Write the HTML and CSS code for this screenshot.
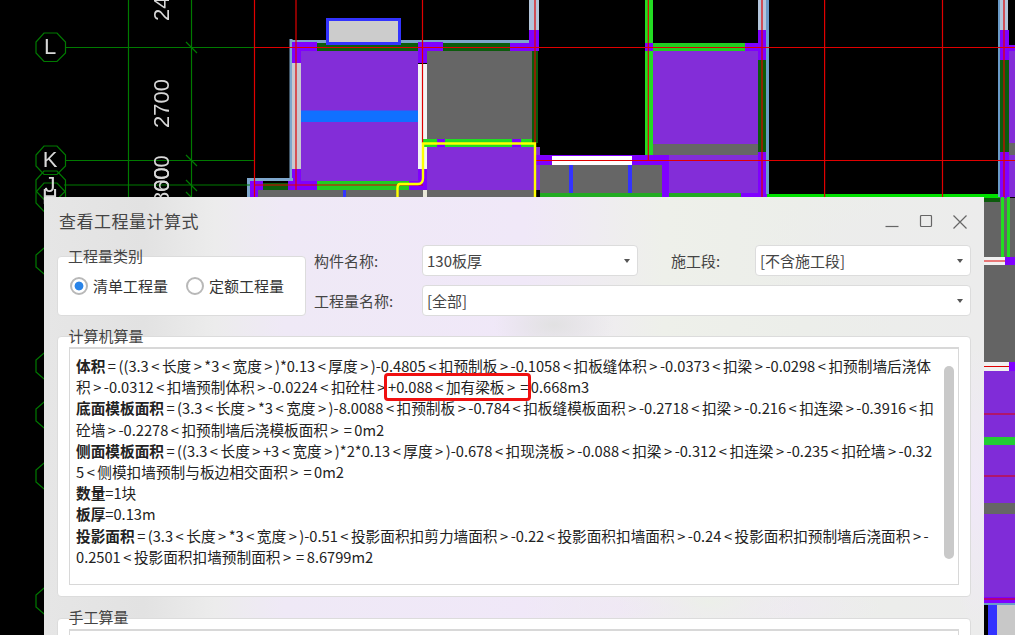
FILE: index.html
```html
<!DOCTYPE html>
<html lang="zh-CN">
<head>
<meta charset="utf-8">
<title>查看工程量计算式</title>
<link rel="stylesheet" href="styles.css">
</head>
<body>
<svg class="cad" width="1015" height="635" viewBox="0 0 1015 635" xmlns="http://www.w3.org/2000/svg">
  <rect width="1015" height="635" fill="#000"/>
  <!-- left walls -->
  <rect x="289.500" y="39" width="3" height="140" fill="#7ea7cc"/>
  <rect x="292" y="40" width="240" height="3" fill="#7ea7cc"/>
  <rect x="292" y="63" width="9" height="106" fill="#c8c8d0"/>
  <rect x="301" y="51" width="117" height="130" fill="#832dd8"/>
  <rect x="301" y="110.500" width="117" height="11.500" fill="#1070ff"/>
  <rect x="292" y="42" width="25" height="9" fill="#8000ff"/>
  <rect x="292" y="42" width="9" height="21" fill="#8000ff"/>
  <rect x="292" y="169" width="9" height="21" fill="#8000ff"/>
  <rect x="317" y="43" width="101" height="8" fill="#0c5c0c"/>
  <rect x="418" y="42" width="25" height="9" fill="#8000ff"/>
  <rect x="418" y="42" width="9" height="21" fill="#8000ff"/>
  <rect x="443" y="43" width="90" height="8" fill="#0c5c0c"/>
  <rect x="418" y="64" width="9" height="105" fill="#f4f4f4"/>
  <rect x="427" y="51" width="105" height="89" fill="#666"/>
  <rect x="427" y="147" width="113" height="43" fill="#832dd8"/>
  <rect x="418" y="169" width="9" height="21" fill="#8000ff"/>
  <rect x="427" y="190" width="108" height="7" fill="#666"/>
  <rect x="423" y="190" width="4" height="7" fill="#e8e8d8"/>
  <!-- small window -->
  <rect x="327.500" y="19.500" width="72" height="24" fill="#ccc" stroke="#3333ff" stroke-width="3"/>
  <!-- lower-left band -->
  <rect x="247" y="178" width="46" height="3" fill="#7ea7cc"/>
  <rect x="247" y="178" width="3" height="19" fill="#7ea7cc"/>
  <rect x="250" y="181" width="13" height="16" fill="#8000ff"/>
  <rect x="263" y="183" width="25" height="7" fill="#0c5c0c"/>
  <rect x="288" y="181" width="29" height="9" fill="#8000ff"/>
  <rect x="317" y="181" width="92" height="9" fill="#22cc22"/>
  <rect x="409" y="181" width="18" height="9" fill="#8000ff"/>
  <rect x="258" y="190" width="165" height="7" fill="#666"/>
  <rect x="343" y="190" width="3" height="7" fill="#3333ff"/>
  <!-- beam -->
  <rect x="423" y="139" width="14" height="8" fill="#22dd22"/>
  <rect x="437" y="139" width="8" height="8" fill="#8000ff"/>
  <rect x="445" y="139" width="67" height="8" fill="#22dd22"/>
  <rect x="512" y="139" width="9" height="8" fill="#8000ff"/>
  <rect x="521" y="139" width="15" height="8" fill="#22dd22"/>
  <!-- middle walls -->
  <rect x="529" y="0" width="10" height="30" fill="#b4c6dc"/>
  <rect x="529" y="30" width="10" height="21" fill="#8000ff"/>
  <rect x="510" y="43" width="29" height="8" fill="#8000ff"/>
  <rect x="532" y="51" width="6" height="92" fill="#0c5c0c"/>
  <rect x="645" y="0" width="8" height="155" fill="#22dd22"/>
  <rect x="645" y="43" width="8" height="8" fill="#8000ff"/>
  <rect x="653" y="43" width="92" height="8" fill="#22cc22"/>
  <rect x="653" y="51" width="105" height="93" fill="#832dd8"/>
  <rect x="653" y="144" width="105" height="11" fill="#666"/>
  <rect x="745" y="43" width="13" height="8" fill="#8000ff"/>
  <rect x="758" y="0" width="10" height="30" fill="#b4c6dc"/>
  <rect x="758" y="30" width="10" height="30" fill="#8000ff"/>
  <rect x="758" y="60" width="8" height="92" fill="#0c5c0c"/>
  <rect x="758" y="152" width="10" height="45" fill="#8000ff"/>
  <rect x="766" y="0" width="3" height="194" fill="#6a9bc8"/>
  <rect x="535" y="155" width="134" height="10" fill="#8000ff"/>
  <rect x="552" y="156" width="80" height="9" fill="#fff"/>
  <rect x="540" y="165" width="122" height="32" fill="#666"/>
  <rect x="569" y="165" width="4" height="29" fill="#3333ff"/>
  <rect x="628" y="165" width="4" height="29" fill="#3333ff"/>
  <rect x="540" y="193" width="122" height="4" fill="#22aa22"/>
  <rect x="662" y="165" width="7" height="32" fill="#8000ff"/>
  <rect x="669" y="155" width="89" height="42" fill="#832dd8"/>
  <rect x="669" y="193" width="72" height="4" fill="#22aa22"/>
  <rect x="741" y="193" width="17" height="4" fill="#8000ff"/>
  <rect x="767" y="194" width="233" height="5" fill="#00e000"/>
  <!-- right walls -->
  <rect x="998" y="0" width="10" height="30" fill="#b4c6dc"/>
  <rect x="998" y="0" width="2" height="197" fill="#6a9bc8"/>
  <rect x="1000" y="30" width="9" height="30" fill="#8000ff"/>
  <rect x="1000" y="60" width="9" height="92" fill="#0c5c0c"/>
  <rect x="1000" y="152" width="9" height="46" fill="#8000ff"/>
  <rect x="1009" y="45" width="6" height="6" fill="#8000ff"/>
  <rect x="1009" y="51" width="6" height="92" fill="#832dd8"/>
  <rect x="1009" y="143" width="6" height="12" fill="#666"/>
  <rect x="1009" y="155" width="6" height="42" fill="#832dd8"/>
  <!-- right strip -->
  <rect x="984" y="198" width="31" height="164" fill="#646464"/>
  <rect x="960" y="198" width="40" height="4" fill="#0c5c0c"/>
  <rect x="1001" y="197" width="3" height="61" fill="#22dd22"/>
  <rect x="1007" y="197" width="3" height="60" fill="#22dd22"/>
  <rect x="984" y="257" width="21" height="8" fill="#f0f0f0"/>
  <rect x="1005" y="257" width="10" height="8" fill="#8000ff"/>
  <rect x="984" y="362" width="25" height="9" fill="#f0f0f0"/>
  <rect x="1009" y="362" width="6" height="9" fill="#8000ff"/>
  <rect x="984" y="371" width="31" height="226" fill="#802cd8"/>
  <rect x="984" y="437" width="31" height="8" fill="#22cc33"/>
  <rect x="984" y="503" width="31" height="11" fill="#666"/>
  <rect x="984" y="597" width="31" height="6" fill="#8000ff"/>
  <rect x="984" y="603" width="31" height="2" fill="#6a9bc8"/>
  <rect x="988" y="605" width="9" height="30" fill="#3333ff"/>
  <rect x="997" y="605" width="18" height="30" fill="#c8c8c8"/>
  <!-- green axis -->
  <g fill="none" stroke="#007a00" stroke-width="1.200">
    <path d="M128.500 0V197M191.500 0V197M66 47.500H296M66 160.500H254.500M64 185H250"/>
    <path d="M186 42L197 53M186 155L197 166M186 180L197 191M186 192L197 203"/>
    <polygon points="44,33 57,33 65.500,42 65.500,53 57,61.500 44,61.500 36,53 36,42"/>
    <polygon points="44,146 57,146 65.500,155 65.500,166 57,174.500 44,174.500 36,166 36,155"/>
    <polygon points="44,171 57,171 65.500,180 65.500,191 57,199.500 44,199.500 36,191 36,180"/>
    <polygon points="44,183 57,183 65.500,192 65.500,203 57,211.500 44,211.500 36,203 36,192"/>
    <polygon points="44,248 57,248 65,255 65,267 57,274 44,274 36,267 36,255"/>
    <polygon points="44,353 57,353 65,360 65,372 57,379 44,379 36,372 36,360"/>
    <polygon points="44,402 57,402 65,409 65,421 57,428 44,428 36,421 36,409"/>
    <polygon points="44,463 57,463 65,470 65,482 57,489 44,489 36,482 36,470"/>
    <polygon points="44,588 57,588 65,595 65,607 57,614 44,614 36,607 36,595"/>
  </g>
  <!-- red lines -->
  <g fill="none" stroke="#e00000" stroke-width="1.200">
    <path d="M254.500 0V197M296 0V190M422.500 0V143M648.300 0V160M762 0V197M824.600 0V197M942.500 0V197M1004 0V197M535 0V143"/>
    <path d="M254.500 47.500H1015M535 160.500H1015M254.500 185H423M552 160.500H632M984 261H1005M984 366.500H1009M984 414H1015M984 476H1015M984 599H1015"/>
  </g>
  <path d="M535 197V143.500H423V178Q423 184 418 184H400Q397.500 184 397.500 188V197" fill="none" stroke="#ffff00" stroke-width="2.400"/>
  <g class="cad-text">
    <text x="50" y="54" text-anchor="middle">L</text>
    <text x="50" y="167" text-anchor="middle">K</text>
    <text x="50" y="192" text-anchor="middle">J</text>
    <text x="50" y="204" text-anchor="middle">H</text>
    <text transform="translate(169 21) rotate(-90)">24</text>
    <text transform="translate(169 128) rotate(-90)">2700</text>
    <text transform="translate(169 192) rotate(-90)">600</text>
    <text transform="translate(169 204) rotate(-90)">800</text>
  </g>
</svg>

<main class="dialog">
  <header class="titlebar">
    <h1 class="title">查看工程量计算式</h1>
    <div class="win-buttons">
      <svg class="win-icon" width="14" height="14" viewBox="0 0 14 14"><path d="M0.500 11.500H13.500"/></svg>
      <svg class="win-icon" width="14" height="14" viewBox="0 0 14 14"><rect x="1.500" y="0.500" width="11" height="11" rx="1"/></svg>
      <svg class="win-icon" width="14" height="14" viewBox="0 0 14 14"><path d="M0.500 0.500L13.500 13.500M13.500 0.500L0.500 13.500"/></svg>
    </div>
  </header>

  <section class="top-row">
    <div class="group type-group">
      <div class="group-title">工程量类别</div>
      <div class="radios">
        <span class="radio-item"><span class="radio radio-on"></span>清单工程量</span>
        <span class="radio-item"><span class="radio"></span>定额工程量</span>
      </div>
    </div>
    <div class="fields">
      <span class="field-label">构件名称:</span>
      <div class="combo"><span>130板厚</span><i class="arrow"></i></div>
      <span class="field-label field-label-mid">施工段:</span>
      <div class="combo"><span>[不含施工段]</span><i class="arrow"></i></div>
      <span class="field-label">工程量名称:</span>
      <div class="combo combo-wide"><span>[全部]</span><i class="arrow"></i></div>
    </div>
  </section>

  <section class="group calc-group">
    <div class="group-title">计算机算量</div>
    <div class="text-box">
      <div class="calc-text">
        <div class="calc-line"><b>体积</b><i>=</i>((3.3<i>&lt;</i>长度<i>&gt;</i>*3<i>&lt;</i>宽度<i>&gt;</i>)*0.13<i>&lt;</i>厚度<i>&gt;</i>)-0.4805<i>&lt;</i>扣预制板<i>&gt;</i>-0.1058<i>&lt;</i>扣板缝体积<i>&gt;</i>-0.0373<i>&lt;</i>扣梁<i>&gt;</i>-0.0298<i>&lt;</i>扣预制墙后浇体</div>
        <div class="calc-line">积<i>&gt;</i>-0.0312<i>&lt;</i>扣墙预制体积<i>&gt;</i>-0.0224<i>&lt;</i>扣砼柱<i>&gt;</i>+0.088<i>&lt;</i>加有梁板<i>&gt;</i><i>=</i>0.668m3</div>
        <div class="calc-line"><b>底面模板面积</b><i>=</i>(3.3<i>&lt;</i>长度<i>&gt;</i>*3<i>&lt;</i>宽度<i>&gt;</i>)-8.0088<i>&lt;</i>扣预制板<i>&gt;</i>-0.784<i>&lt;</i>扣板缝模板面积<i>&gt;</i>-0.2718<i>&lt;</i>扣梁<i>&gt;</i>-0.216<i>&lt;</i>扣连梁<i>&gt;</i>-0.3916<i>&lt;</i>扣</div>
        <div class="calc-line">砼墙<i>&gt;</i>-0.2278<i>&lt;</i>扣预制墙后浇模板面积<i>&gt;</i><i>=</i>0m2</div>
        <div class="calc-line"><b>侧面模板面积</b><i>=</i>((3.3<i>&lt;</i>长度<i>&gt;</i>+3<i>&lt;</i>宽度<i>&gt;</i>)*2*0.13<i>&lt;</i>厚度<i>&gt;</i>)-0.678<i>&lt;</i>扣现浇板<i>&gt;</i>-0.088<i>&lt;</i>扣梁<i>&gt;</i>-0.312<i>&lt;</i>扣连梁<i>&gt;</i>-0.235<i>&lt;</i>扣砼墙<i>&gt;</i>-0.32</div>
        <div class="calc-line">5<i>&lt;</i>侧模扣墙预制与板边相交面积<i>&gt;</i><i>=</i>0m2</div>
        <div class="calc-line"><b>数量</b>=1块</div>
        <div class="calc-line"><b>板厚</b>=0.13m</div>
        <div class="calc-line"><b>投影面积</b><i>=</i>(3.3<i>&lt;</i>长度<i>&gt;</i>*3<i>&lt;</i>宽度<i>&gt;</i>)-0.51<i>&lt;</i>投影面积扣剪力墙面积<i>&gt;</i>-0.22<i>&lt;</i>投影面积扣墙面积<i>&gt;</i>-0.24<i>&lt;</i>投影面积扣预制墙后浇面积<i>&gt;</i>-</div>
        <div class="calc-line">0.2501<i>&lt;</i>投影面积扣墙预制面积<i>&gt;</i><i>=</i>8.6799m2</div>
      </div>
      <div class="scrollbar"></div>
      <div class="highlight"></div>
    </div>
  </section>

  <section class="group manual-group">
    <div class="group-title">手工算量</div>
    <div class="text-box text-box-manual"></div>
  </section>
</main>
</body>
</html>
```

FILE: styles.css
```css
* { box-sizing: border-box; }
html, body {
  margin: 0;
  width: 1015px;
  height: 635px;
  overflow: hidden;
  background: #000;
}
body {
  position: relative;
  font-family: "Noto Sans CJK SC", "Noto Sans", sans-serif;
  font-size: 15px;
  color: #333;
}
.cad {
  position: absolute;
  left: 0;
  top: 0;
  display: block;
  filter: blur(0.45px);
}
.cad-text text {
  font-family: "Liberation Sans", sans-serif;
  font-size: 22px;
  fill: #d8d8d8;
}
.dialog {
  position: absolute;
  left: 44px;
  top: 197px;
  width: 940px;
  height: 438px;
  overflow: hidden;
  padding: 0 13px;
  background:
    radial-gradient(ellipse 90px 40px at 665px 405px, rgba(236,240,232,.9), rgba(236,240,232,0)),
    radial-gradient(ellipse 200px 30px at 640px 410px, rgba(240,230,248,.95), rgba(240,230,248,0)),
    radial-gradient(ellipse 30px 140px at 932px 290px, rgba(240,232,248,1), rgba(240,232,248,0)),
    radial-gradient(ellipse 60px 30px at 510px 128px, rgba(224,224,224,.9), rgba(224,224,224,0)),
    radial-gradient(ellipse 150px 80px at 860px 60px, rgba(236,236,236,1), rgba(236,236,236,0)),
    linear-gradient(90deg, #e6e6e6 0, #e2e2e2 100px, #ececec 170px, #efe9f6 240px, #f0e8f8 480px, #eef0ea 620px, #eceeea 760px, #ececec 100%);
}
.titlebar {
  display: flex;
  align-items: center;
  justify-content: space-between;
  height: 48px;
  padding: 0 4px 0 2px;
}
.title {
  margin: 0;
  font-size: 17px;
  font-weight: 400;
  letter-spacing: .5px;
  color: #444;
  line-height: 50px;
}
.win-buttons {
  display: flex;
  gap: 20px;
  margin-top: 2px;
}
.win-icon {
  display: block;
  fill: none;
  stroke: #666;
  stroke-width: 1.200;
}
.top-row {
  display: flex;
  align-items: flex-start;
}
.group {
  background: #fff;
  border: 1px solid #dcdcdc;
  border-radius: 4px;
}
.group-title {
  height: 20px;
  margin: -11px 0 0 10px;
  line-height: 20px;
  color: #444;
}
.type-group {
  width: 249px;
  height: 60px;
  margin-top: 11px;
  flex: none;
}
.radios {
  display: flex;
  gap: 18px;
  padding: 0 0 0 12px;
  margin-top: 10px;
  line-height: 20px;
}
.radio-item {
  display: flex;
  align-items: center;
  gap: 5px;
  color: #333;
}
.radio {
  width: 18px;
  height: 18px;
  border: 2px solid #b8b8b8;
  border-radius: 50%;
  background: #fff;
  flex: none;
}
.radio-on {
  background: radial-gradient(circle, #2a84e8 0, #2a84e8 4px, #fff 4.800px);
}
.fields {
  display: grid;
  grid-template-columns: 108px 216px 117px 216px;
  grid-auto-rows: 31px;
  row-gap: 9px;
  margin-left: 8px;
  align-items: center;
}
.field-label {
  color: #444;
  white-space: nowrap;
}
.field-label-mid {
  padding-left: 33px;
}
.combo {
  display: flex;
  align-items: center;
  justify-content: space-between;
  height: 31px;
  padding: 0 7px 0 4px;
  background: #fff;
  border: 1px solid #dcdcdc;
  border-radius: 4px;
  color: #444;
}
.combo-wide {
  grid-column: 2 / 5;
}
.arrow {
  width: 0;
  height: 0;
  border-left: 3.500px solid transparent;
  border-right: 3.500px solid transparent;
  border-top: 4px solid #555;
}
.calc-group {
  height: 261px;
  margin-top: 20px;
  padding: 0 11px;
}
.calc-group .group-title,
.manual-group .group-title {
  margin-left: -.5px;
}
.text-box {
  position: relative;
  display: flex;
  height: 238px;
  margin-top: 1px;
  border: 1px solid #d8d8d8;
  border-top-width: 2px;
  background: #fff;
}
.calc-text {
  flex: 1;
  padding: 6px 0 0 6px;
  font-size: 14.670px;
  line-height: 21.200px;
  color: #222;
  white-space: nowrap;
}
.calc-line b {
  font-weight: 700;
}
.calc-line i {
  font-style: normal;
  padding: 0 2.500px;
}
.scrollbar {
  width: 10px;
  height: 193px;
  margin: 17px 4px 0 0;
  border-radius: 5px;
  background: #c9c9c9;
  flex: none;
}
.highlight {
  position: absolute;
  left: 314px;
  top: 24px;
  width: 147px;
  height: 28px;
  border: 3px solid #f01010;
  border-radius: 4px;
}
.manual-group {
  height: 60px;
  margin-top: 21px;
  padding: 0 11px;
}
.manual-group .group-title {
  margin-top: -12px;
}
.manual-group .text-box {
  margin-top: 2px;
}
.text-box-manual {
  height: 40px;
}
```
